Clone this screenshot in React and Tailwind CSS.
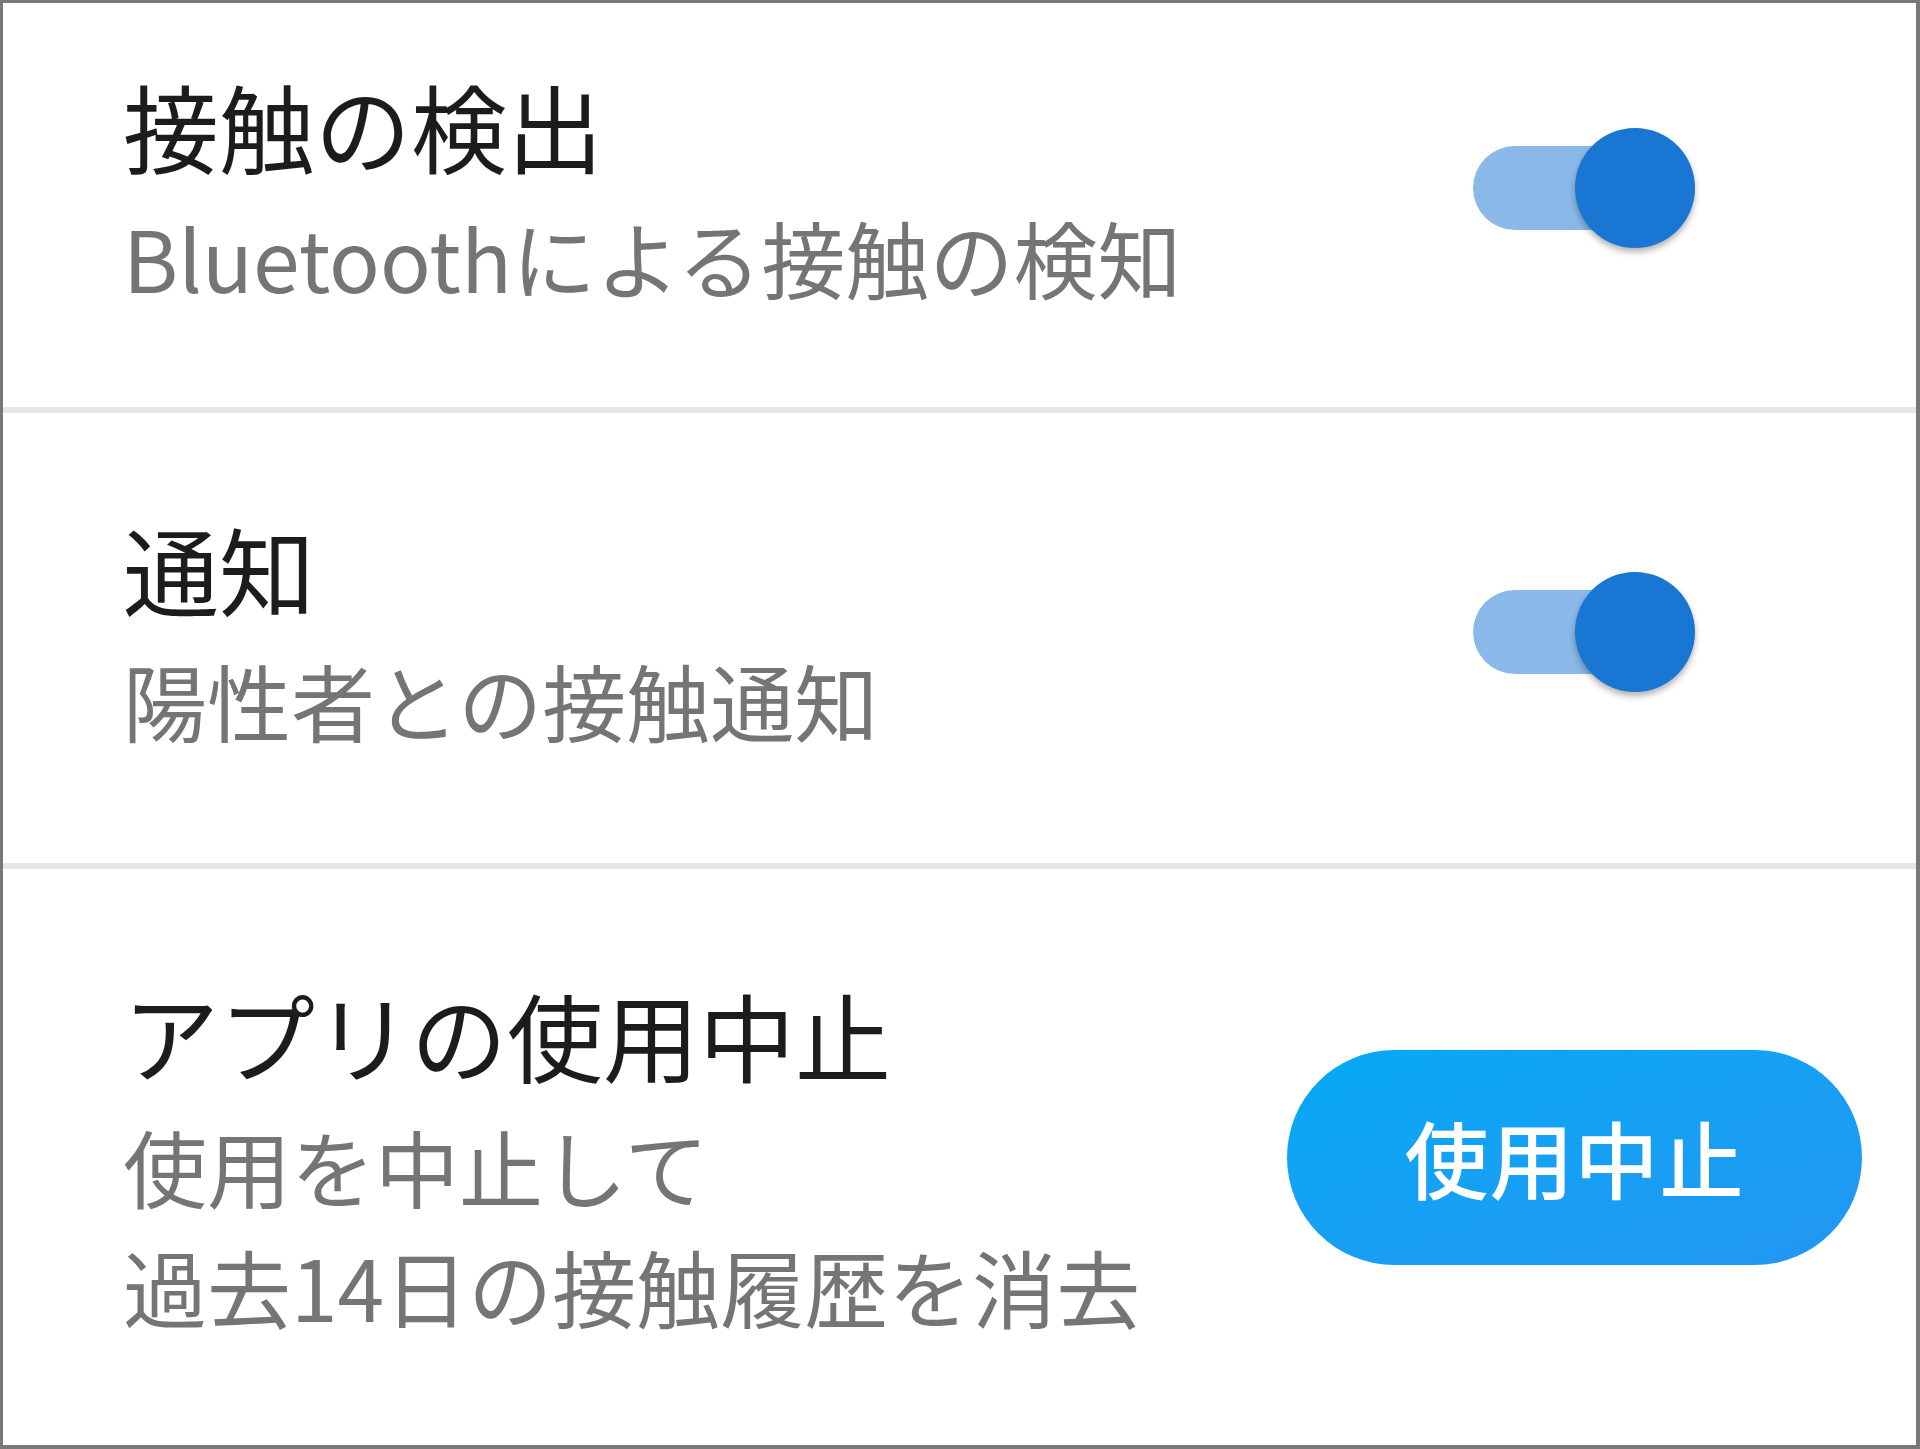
import React from 'react';

const font = { fontFamily: '"Noto Sans CJK JP", "Noto Sans", sans-serif' };

function Toggle({ className = '' }) {
  return (
    <div className={`relative w-[222px] h-[120px] shrink-0 ${className}`}>
      <div className="absolute left-0 top-[18px] w-[204px] h-[84px] rounded-full bg-[#8ab8e9]" />
      <div className="absolute right-0 top-0 w-[120px] h-[120px] rounded-full bg-[#1976d2] shadow-[0_4px_6px_rgba(0,0,0,0.3)]" />
    </div>
  );
}

function Texts({ title, lines }) {
  return (
    <div className="flex flex-col">
      <div className="text-[96px] leading-[144px] font-normal text-[#1c1c1c]">{title}</div>
      {lines.map(l => (
        <div key={l} className="text-[84px] leading-[120px] text-[#757575]">{l}</div>
      ))}
    </div>
  );
}

export default function App() {
  return (
    <div
      style={font}
      className="w-[1920px] h-[1449px] bg-white border-t-[3px] border-l-[3px] border-r-[4px] border-b-[4px] border-[#787878] flex flex-col overflow-hidden"
    >
      {/* 接触の検出 */}
      <div className="flex items-center justify-between pl-[120px] pr-[221px] pt-[50px] pb-[90px] border-b-[6px] border-[#e6e6e6]">
        <Texts title="接触の検出" lines={['Bluetoothによる接触の検知']} />
        <Toggle className="mt-[6px]" />
      </div>

      {/* 通知 */}
      <div className="flex items-center justify-between pl-[120px] pr-[221px] pt-[83px] pb-[103px] border-b-[6px] border-[#e6e6e6]">
        <Texts title="通知" lines={['陽性者との接触通知']} />
        <Toggle className="mt-[8px]" />
      </div>

      {/* アプリの使用中止 */}
      <div className="flex-1 flex items-center justify-between pl-[120px] pr-[54px] pt-[93px] pb-[99px]">
        <Texts title="アプリの使用中止" lines={['使用を中止して', '過去14日の接触履歴を消去']} />
        <button className="w-[575px] h-[215px] mt-[6px] rounded-full bg-gradient-to-br from-[#03a9f4] to-[#2196f3] text-white text-[84px] font-medium tracking-[1px]">
          使用中止
        </button>
      </div>
    </div>
  );
}
